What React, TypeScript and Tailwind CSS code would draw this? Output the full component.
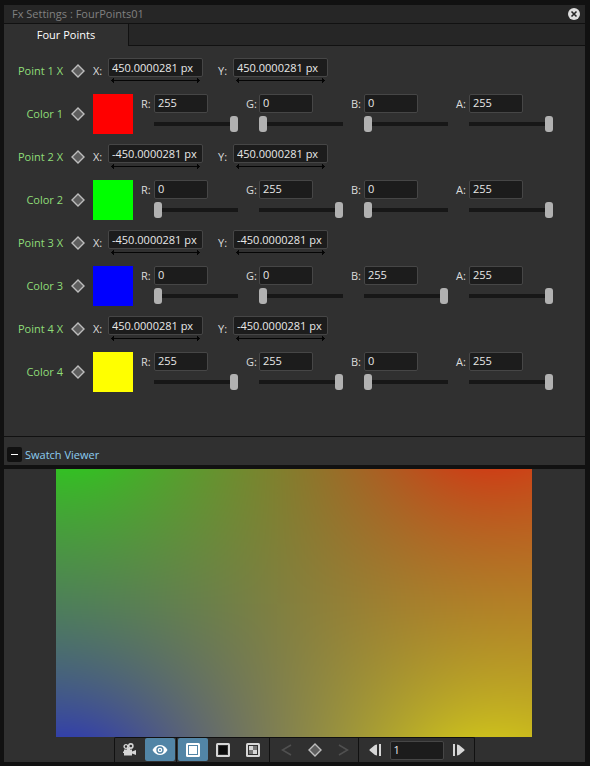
import { useEffect, useRef, useState } from "react";

type RGB = [number, number, number];

const points: { x: string; y: string; color: RGB; swatch: string }[] = [
  { x: "450.0000281 px", y: "450.0000281 px", color: [255, 0, 0], swatch: "bg-[#ff0000]" },
  { x: "-450.0000281 px", y: "450.0000281 px", color: [0, 255, 0], swatch: "bg-[#00ff00]" },
  { x: "-450.0000281 px", y: "-450.0000281 px", color: [0, 0, 255], swatch: "bg-[#0000ff]" },
  { x: "450.0000281 px", y: "-450.0000281 px", color: [255, 255, 0], swatch: "bg-[#ffff00]" },
];

const fieldClass =
  "h-[19px] rounded-[2px] border border-[#464646] bg-[#1c1c1c] px-[3px] pb-px text-[11px] leading-4 text-[#e8e8e8] outline-none focus:border-[#5285a6]";

function Keyframe() {
  return (
    <svg width="14" height="14" viewBox="0 0 14 14" aria-hidden="true">
      <path d="M7 1 L13 7 L7 13 L1 7 Z" fill="#5e5e5e" stroke="#bdbdbd" strokeWidth="1.4" />
    </svg>
  );
}

function RowLabel({ text }: { text: string }) {
  return (
    <>
      <span className="w-[59px] shrink-0 text-right text-[#8fdd78]">{text}</span>
      <button type="button" aria-label={`${text} keyframe`} className="ml-2 shrink-0">
        <Keyframe />
      </button>
    </>
  );
}

function CoordinateField({ id, axis, value }: { id: string; axis: string; value: string }) {
  return (
    <div className="flex w-[125px] shrink-0 items-center">
      <label htmlFor={id} className="w-[15px] text-[#dcdcdc]">
        {axis}:
      </label>
      <div className="flex w-[95px] flex-col gap-px">
        <input id={id} defaultValue={value} className={`${fieldClass} w-full`} />
        <svg width="95" height="5" viewBox="0 0 95 5" aria-hidden="true">
          <path d="M3 2 H92 V3 H3 Z" fill="#050505" />
          <path d="M3 2 H4 V1 H5 V0 H6 V5 H5 V4 H4 V3 H3 Z M92 2 H91 V1 H90 V0 H89 V5 H90 V4 H91 V3 H92 Z" fill="#050505" />
        </svg>
      </div>
    </div>
  );
}

function ChannelField({ id, name, initial }: { id: string; name: string; initial: number }) {
  const [value, setValue] = useState(initial);
  return (
    <div className="flex w-[105px] shrink-0">
      <label htmlFor={id} className="w-[13px] leading-5 text-[#dcdcdc]">
        {name}:
      </label>
      <div className="flex flex-col items-start gap-[3px]">
        <input
          id={id}
          value={value}
          onChange={(e) => setValue(Number(e.target.value) || 0)}
          className={`${fieldClass} w-[54px]`}
        />
        <input
          type="range"
          min={0}
          max={255}
          value={value}
          aria-label={`${name} slider`}
          onChange={(e) => setValue(Number(e.target.value))}
          className="h-4 w-[84px] appearance-none bg-transparent [&::-webkit-slider-runnable-track]:h-1 [&::-webkit-slider-runnable-track]:bg-[#171717] [&::-webkit-slider-thumb]:-mt-1.5 [&::-webkit-slider-thumb]:h-4 [&::-webkit-slider-thumb]:w-2 [&::-webkit-slider-thumb]:appearance-none [&::-webkit-slider-thumb]:rounded-[3px] [&::-webkit-slider-thumb]:bg-[#b1b1b1]"
        />
      </div>
    </div>
  );
}

// Corner positions in preview pixels, ordered like `points`.
const anchors = [
  [430, -72],
  [12, -72],
  [12, 340],
  [430, 340],
];

function Swatch() {
  const ref = useRef<HTMLCanvasElement>(null);
  useEffect(() => {
    const canvas = ref.current;
    const ctx = canvas?.getContext("2d");
    if (!canvas || !ctx) return;
    const { width, height } = canvas;
    const image = ctx.createImageData(width, height);
    for (let y = 0; y < height; y++) {
      for (let x = 0; x < width; x++) {
        let total = 0;
        const mix = [0, 0, 0];
        anchors.forEach(([px, py], i) => {
          const weight = 1 / Math.hypot(x - px, y - py);
          total += weight;
          for (let c = 0; c < 3; c++) mix[c] += weight * points[i].color[c];
        });
        const at = (y * width + x) * 4;
        for (let c = 0; c < 3; c++) image.data[at + c] = mix[c] / total;
        image.data[at + 3] = 255;
      }
    }
    ctx.putImageData(image, 0, 0);
  }, []);
  return <canvas ref={ref} width={476} height={268} className="block w-[476px] max-w-full" />;
}

function ToolButton({ label, active, children }: { label: string; active?: boolean; children: React.ReactNode }) {
  return (
    <button
      type="button"
      aria-label={label}
      aria-pressed={active}
      className={`flex h-[23px] w-[30px] items-center justify-center rounded-[2px] ${active ? "bg-[#5285a6]" : ""}`}
    >
      {children}
    </button>
  );
}

function Toolbar() {
  return (
    <div className="flex h-[25px] rounded-t-[2px] border-x border-t border-[#111111]">
      <div className="flex border-r border-[#111111] pr-px">
        <ToolButton label="Camera">
          <svg width="14" height="13" viewBox="0 0 14 13" fill="#d6d6d6">
            <circle cx="3" cy="3.500" r="1.900" fill="none" stroke="#d6d6d6" strokeWidth="1.400" />
            <circle cx="7.800" cy="3" r="2.100" fill="none" stroke="#d6d6d6" strokeWidth="1.600" />
            <path d="M4 5 H7 V7 H4 Z M1 6.500 H9 V8.500 L13 7 V12 L9 10.500 V12.500 H1 V10 H0 V8.500 H1 Z" />
          </svg>
        </ToolButton>
        <ToolButton label="Preview" active>
          <svg width="16" height="12" viewBox="0 0 16 12">
            <path d="M0.500 6 C4 -0.800 12 -0.800 15.500 6 C12 12.800 4 12.800 0.500 6 Z" fill="#fff" />
            <circle cx="8" cy="6" r="3.700" fill="#5285a6" />
            <circle cx="8" cy="6" r="2.300" fill="#fff" />
            <circle cx="8" cy="6" r="1" fill="#5285a6" />
          </svg>
        </ToolButton>
      </div>
      <div className="flex border-r border-[#111111] px-px">
        <ToolButton label="White background" active>
          <svg width="14" height="14" viewBox="0 0 14 14">
            <rect width="14" height="14" rx="1.500" fill="#fff" />
            <rect x="2.500" y="2.500" width="9" height="9" fill="#fff" stroke="#5285a6" />
          </svg>
        </ToolButton>
        <ToolButton label="Black background">
          <svg width="14" height="14" viewBox="0 0 14 14">
            <rect width="14" height="14" rx="1.500" fill="#d6d6d6" />
            <rect x="2.500" y="2.500" width="9" height="9" fill="#0c0c0c" stroke="#303030" />
          </svg>
        </ToolButton>
        <ToolButton label="Checkered background">
          <svg width="14" height="14" viewBox="0 0 14 14">
            <rect width="14" height="14" rx="1.500" fill="#d6d6d6" />
            <rect x="2" y="2" width="10" height="10" fill="#303030" />
            <path d="M3 3 H7 V7 H3 Z M7 7 H11 V11 H7 Z" fill="#d6d6d6" />
            <path d="M7 3 H11 V7 H7 Z M3 7 H7 V11 H3 Z" fill="#777" />
          </svg>
        </ToolButton>
      </div>
      <div className="flex w-[89px] items-center justify-between border-r border-[#111111] pr-[9px] pl-[11px]">
        <button type="button" aria-label="Previous keyframe">
          <svg width="11" height="12" viewBox="0 0 11 12" fill="none" stroke="#505050" strokeWidth="1.500">
            <path d="M10 1 L1.500 6 L10 11" />
          </svg>
        </button>
        <button type="button" aria-label="Add keyframe">
          <Keyframe />
        </button>
        <button type="button" aria-label="Next keyframe">
          <svg width="11" height="12" viewBox="0 0 11 12" fill="none" stroke="#505050" strokeWidth="1.500">
            <path d="M1 1 L9.500 6 L1 11" />
          </svg>
        </button>
      </div>
      <div className="flex w-[115px] items-center gap-[9px] pl-2.5">
        <button type="button" aria-label="Previous frame">
          <svg width="12" height="12" viewBox="0 0 12 12" fill="#d6d6d6">
            <path d="M8 0.500 V11.500 L6 11 L0.500 6.500 V5.500 L6 1 Z M10 0 H12 V12 H10 Z" />
          </svg>
        </button>
        <input aria-label="Frame" defaultValue="1" className={`${fieldClass} w-[54px]`} />
        <button type="button" aria-label="Next frame">
          <svg width="12" height="12" viewBox="0 0 12 12" fill="#d6d6d6">
            <path d="M4 0.500 V11.500 L6 11 L11.500 6.500 V5.500 L6 1 Z M0 0 H2 V12 H0 Z" />
          </svg>
        </button>
      </div>
    </div>
  );
}

export default function App() {
  return (
    <main className="flex min-h-screen flex-col bg-[#111111] pt-[5px] pr-[5px] pb-1 pl-1 font-['Open_Sans','Noto_Sans',sans-serif] text-[11px] leading-4">
      <header className="flex h-[18px] items-center justify-between bg-[#262626] pr-[5px] pl-2">
        <h1 className="text-[#808080]">Fx Settings : FourPoints01</h1>
        <button type="button" aria-label="Close">
          <svg width="12" height="12" viewBox="0 0 12 12">
            <circle cx="6" cy="6" r="6" fill="#dedede" />
            <path d="M3.500 3.500 L8.500 8.500 M8.500 3.500 L3.500 8.500" stroke="#262626" strokeWidth="1.600" />
          </svg>
        </button>
      </header>

      <nav className="mt-px flex h-[22px]">
        <button type="button" className="w-[124px] bg-[#303030] text-white">
          Four Points
        </button>
        <div className="flex-1 border-b border-l border-[#111111] bg-[#262626]" />
      </nav>

      <section className="bg-[#303030] pt-[3px] pb-[43px]">
        {points.map((point, i) => {
          const n = i + 1;
          return (
            <div key={n}>
              <div className="flex h-[43px] items-center">
                <RowLabel text={`Point ${n} X`} />
                <div className="ml-2 flex">
                  <CoordinateField id={`x${n}`} axis="X" value={point.x} />
                  <CoordinateField id={`y${n}`} axis="Y" value={point.y} />
                </div>
              </div>
              <div className="flex h-[43px] items-center">
                <RowLabel text={`Color ${n}`} />
                <div className="ml-2 flex">
                  <button type="button" aria-label={`Pick color ${n}`} className={`mr-2 size-10 shrink-0 ${point.swatch}`} />
                  <ChannelField id={`r${n}`} name="R" initial={point.color[0]} />
                  <ChannelField id={`g${n}`} name="G" initial={point.color[1]} />
                  <ChannelField id={`b${n}`} name="B" initial={point.color[2]} />
                  <ChannelField id={`a${n}`} name="A" initial={255} />
                </div>
              </div>
            </div>
          );
        })}
      </section>

      <section className="mt-px flex h-7 items-center gap-[3px] bg-[#303030] pt-2.5 pb-[3px] pl-[3px]">
        <button
          type="button"
          aria-label="Collapse swatch viewer"
          className="flex size-[15px] items-center justify-center rounded-[2px] bg-[#111111]"
        >
          <span className="h-px w-[7px] bg-white" />
        </button>
        <h2 className="text-[#8ccdf0]">Swatch Viewer</h2>
      </section>

      <section className="mt-1 flex flex-1 flex-col items-center bg-[#303030] pr-px">
        <Swatch />
        <Toolbar />
      </section>
    </main>
  );
}
